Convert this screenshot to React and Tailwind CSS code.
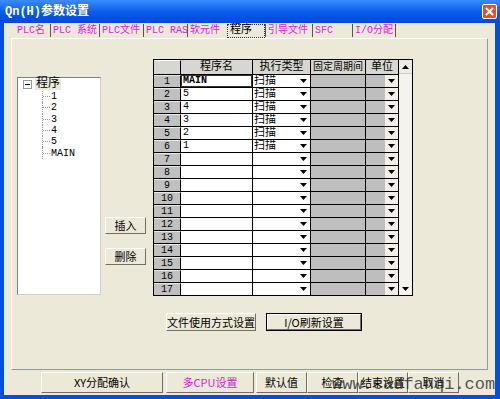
import React from "react";

const F = "font-[family-name:'Liberation_Mono','Noto_Sans_CJK_SC',monospace]";
const CJK = "font-[family-name:'Noto_Sans_CJK_SC',sans-serif]";

const Down = () => (
  <svg width="7" height="4" viewBox="0 0 7 4"><path d="M0 0H7L3.5 4Z" fill="#000" /></svg>
);
const Up = () => (
  <svg width="7" height="4" viewBox="0 0 7 4"><path d="M0 4H7L3.5 0Z" fill="#000" /></svg>
);

const tabs = [
  { t: "PLC名", w: "w-[35px]", b: false },
  { t: "PLC 系统", w: "w-[49px]", b: true },
  { t: "PLC文件", w: "w-[44px]", b: true },
  { t: "PLC RAS", w: "w-[44px]", b: true },
  { t: "软元件", w: "w-[40px]", b: true },
];
const tabs2 = [
  { t: "引导文件", w: "w-[47px]" },
  { t: "SFC", w: "w-[40px]" },
  { t: "I/O分配", w: "w-[43px]" },
];

const names = ["MAIN", "5", "4", "3", "2", "1"];

function Btn({ children, className = "", magenta = false }) {
  return (
    <div
      className={`flex items-center justify-center border-t border-l border-t-white border-l-white border-r border-b border-r-[#716F64] border-b-[#716F64] bg-[#ECE9D8] text-[11px] ${CJK} ${magenta ? "text-[#E020D8]" : "text-black"} ${className}`}
    >
      {children}
    </div>
  );
}

export default function App() {
  const rows = Array.from({ length: 17 }, (_, i) => i);
  return (
    <div className="w-[500px] h-[399px] flex flex-col bg-[#0050E0] overflow-hidden relative">
      {/* title bar */}
      <div className="h-[23px] flex items-center justify-between pl-[5px] pr-[3px] bg-gradient-to-b from-[#3A8CFF] via-[#0A5EEA] to-[#0049D8]">
        <span className={`text-white text-[12px] font-bold ${F}`}>Qn(H)参数设置</span>
        <div className="w-[15px] h-[15px] rounded-[2px] border border-white bg-[#E2512A] flex items-center justify-center">
          <svg width="9" height="9" viewBox="0 0 9 9"><path d="M1 1L8 8M8 1L1 8" stroke="#fff" strokeWidth="2" /></svg>
        </div>
      </div>
      {/* body */}
      <div className="flex-1 ml-[4px] mr-[5px] mb-[4px] bg-[#ECE9D8] flex flex-col">
        {/* tabs */}
        <div className={`h-[15px] flex items-center pl-[11px] text-[10px] leading-[13px] ${F}`}>
          {tabs.map((t, i) => (
            <span key={i} className={`${t.w} h-[13px] flex items-center pl-[2px] text-[#E020D8] whitespace-nowrap ${t.b ? "border-l border-[#555]" : ""}`}>{t.t}</span>
          ))}
          <span className="w-[38px] h-[14px] flex items-center pl-[2px] text-black border border-dotted border-[#333] whitespace-nowrap text-[11px]">程序</span>
          {tabs2.map((t, i) => (
            <span key={i} className={`${t.w} h-[13px] flex items-center pl-[2px] text-[#E020D8] whitespace-nowrap border-l border-[#555]`}>{t.t}</span>
          ))}
          <span className="h-[13px] border-l border-[#555]" />
        </div>
        {/* panel */}
        <div className="mx-[7px] h-[332px] border-t border-l border-white border-r border-b border-r-[#919B9C] border-b-[#919B9C] flex flex-col">
          <div className="flex pt-[20px] pl-[5px]">
            {/* tree */}
            <div className={`mt-[18px] w-[84px] h-[218px] bg-white border border-t-[#808080] border-l-[#808080] border-r-[#D4D0C8] border-b-[#D4D0C8] pl-[5px] pt-[1px] text-[11px] ${F}`}>
              <div className="flex items-center h-[11px]">
                <div className="w-[9px] h-[9px] border border-[#919B9C] flex items-center justify-center bg-white">
                  <div className="w-[5px] h-px bg-black" />
                </div>
                <span className="ml-[3px] px-[1px] bg-[#ECE9D8] leading-[11px] text-[12px]">程序</span>
              </div>
              <div className="ml-[19px] mt-[1px]">
                {["1", "2", "3", "4", "5", "MAIN"].map((c, i) => (
                  <div key={i} className="flex items-center h-[11.3px]">
                    <div className={`w-[8px] h-full flex items-center border-l border-dotted border-[#999] ${i === 5 ? "h-[6px] self-start" : ""}`}>
                      <div className="w-full border-t border-dotted border-[#999]" />
                    </div>
                    <span className="ml-[1px] text-[10px] leading-[11px]">{c}</span>
                  </div>
                ))}
              </div>
            </div>
            {/* buttons */}
            <div className="ml-[4px] w-[41px] flex flex-col">
              <Btn className="mt-[158px] h-[17px]">插入</Btn>
              <Btn className="mt-[14px] h-[17px]">删除</Btn>
            </div>
            {/* grid */}
            <div className="ml-[7px] flex">
              <div className={`border-l border-t border-black text-[11px] ${F}`}>
                <div className="flex h-[15px] border-b border-black bg-[#D8D6D0]">
                  <div className="w-[27px] border-r border-black border-t border-t-white" />
                  <div className="w-[72px] border-r border-black flex items-center justify-center">程序名</div>
                  <div className="w-[58px] border-r border-black flex items-center justify-center">执行类型</div>
                  <div className="w-[55px] border-r border-black flex items-center justify-center whitespace-nowrap text-[10px]">固定周期间</div>
                  <div className="w-[33px] border-r border-black flex items-center justify-center">单位</div>
                </div>
                {rows.map((i) => (
                  <div key={i} className="flex h-[13px] border-b border-black">
                    <div className="w-[27px] border-r border-black bg-[#C0C0C0] border-t border-t-[#E8E8E8] flex items-center justify-center text-[10px] leading-none">{i + 1}</div>
                    <div className="w-[72px] border-r border-black bg-white flex items-center">
                      {i === 0 ? (
                        <div className="w-full h-full border border-[#333] flex items-center pl-[1px] text-[10px] font-bold leading-none">MAIN</div>
                      ) : (
                        <span className="pl-[2px] text-[10px] leading-none">{names[i] ?? ""}</span>
                      )}
                    </div>
                    <div className="w-[58px] border-r border-black bg-white flex items-center justify-between pr-[3px]">
                      <span className="pl-[1px] text-[11px] leading-none">{i < 6 ? "扫描" : ""}</span>
                      <Down />
                    </div>
                    <div className="w-[55px] border-r border-black bg-[#BEBEBE]" />
                    <div className="w-[33px] border-r border-black bg-[#BEBEBE] flex justify-end">
                      <div className="w-[13px] h-full bg-[#F1EFE6] flex items-center justify-center"><Down /></div>
                    </div>
                  </div>
                ))}
              </div>
              {/* scrollbar */}
              <div className="w-[14px] border-t border-r border-b border-black flex flex-col bg-[#F4F3EE]">
                <div className="h-[14px] bg-[#ECEBE4] border-b border-[#D0CEC4] flex items-center justify-center"><Up /></div>
                <div className="flex-1" />
                <div className="h-[13px] flex items-center justify-center"><Down /></div>
              </div>
            </div>
          </div>
          {/* panel bottom buttons */}
          <div className="flex mt-[17px] pl-[154px]">
            <Btn className="w-[90px] h-[18px]">文件使用方式设置</Btn>
            <div className="ml-[10px] w-[96px] h-[18px] border border-black">
              <Btn className={`w-full h-full ${F}`}>I/O刷新设置</Btn>
            </div>
          </div>
        </div>
        {/* bottom row */}
        <div className={`flex mt-[2px] pl-[37px] h-[21px] ${F}`}>
          <Btn className="w-[122px] h-full">XY分配确认</Btn>
          <Btn className="ml-[3px] w-[88px] h-full" magenta>多CPU设置</Btn>
          <Btn className="ml-[2px] w-[51px] h-full">默认值</Btn>
          <Btn className="w-[51px] h-full">检查</Btn>
          <Btn className="w-[50px] h-full">结束设置</Btn>
          <Btn className="w-[51px] h-full">取消</Btn>
        </div>
      </div>
      <div className={`absolute left-[332px] top-[375px] text-[17px] leading-[20px] text-[#2a2a2a]/80 font-['Liberation_Mono',monospace] whitespace-nowrap`}>www.cadfanqi.com</div>
    </div>
  );
}
